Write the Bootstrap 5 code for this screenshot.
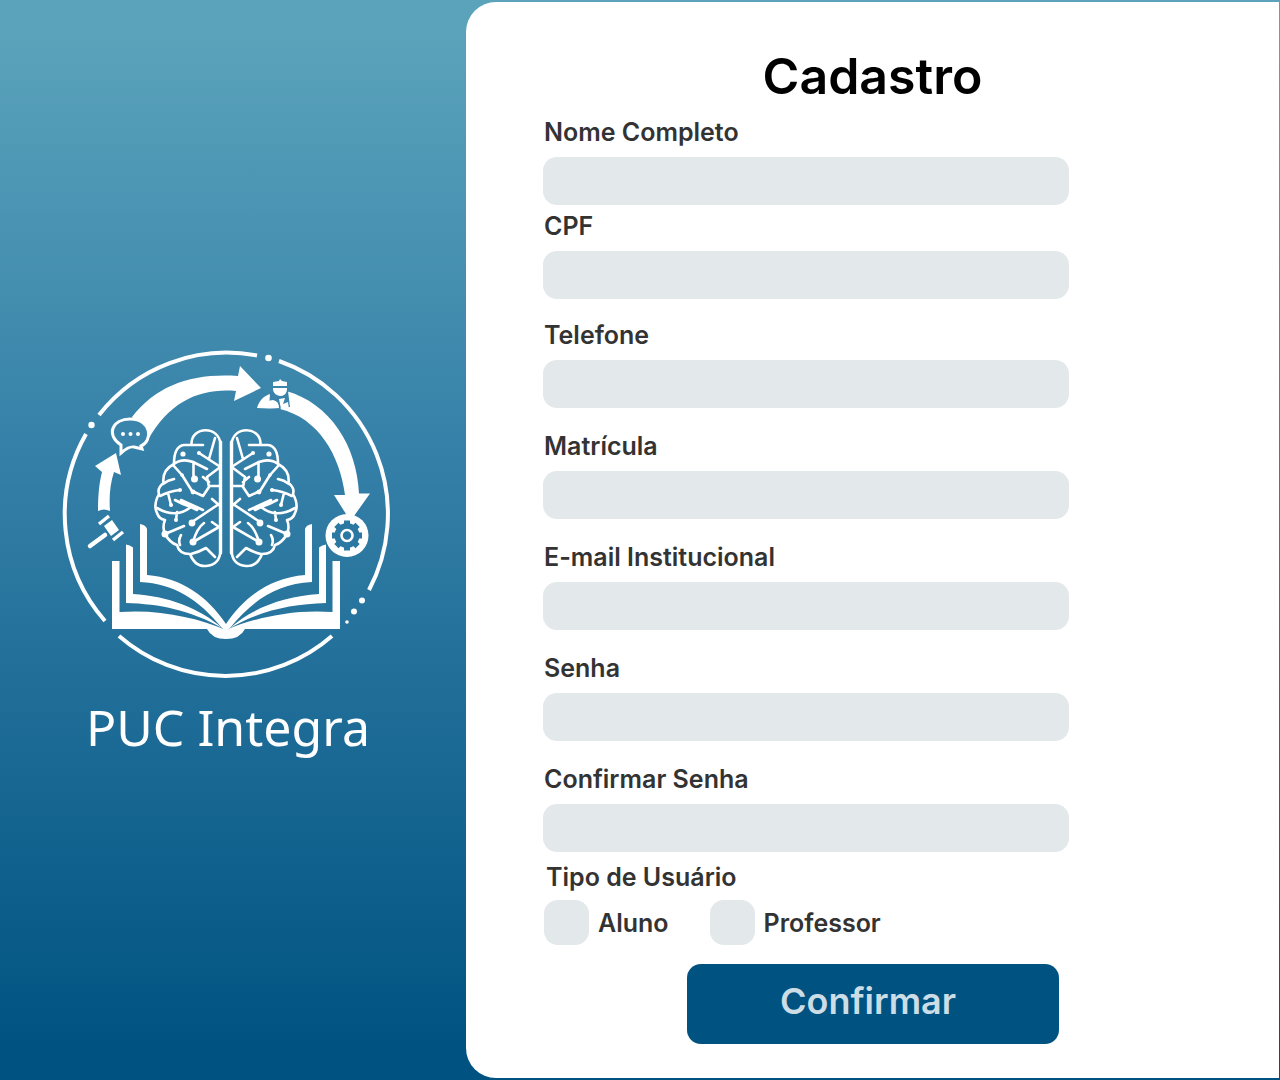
<!DOCTYPE html>
<html lang="pt-BR">
<head>
<meta charset="utf-8">
<meta name="viewport" content="width=device-width, initial-scale=1">
<title>PUC Integra - Cadastro</title>
<link href="https://cdn.jsdelivr.net/npm/bootstrap@5.3.0/dist/css/bootstrap.min.css" rel="stylesheet">
<style>
  body { font-family: Inter, "Liberation Sans", sans-serif; color: #333; }
  .page-shell { background: linear-gradient(180deg, #5ba3bb 3%, #3580a8 42%, #005381 97%); padding: 2px 1px 2px 0; }
  .brand-side { flex: 0 0 466px; padding: 28px 14px 0 0; }
  .brand-logo { width: 332px; }
  .brand-name { font: 400 50px/68px "Noto Sans", sans-serif; margin: 13px 0 0 4px; }
  .form-side { border-radius: 30px 0 0 30px; padding: 44px 77px 34px; }
  .page-title { font-size: 50px; line-height: 60px; font-weight: 600; color: #000; margin-bottom: 11px; }
  .field-text { display: block; font-size: 25px; line-height: 30px; font-weight: 600; margin-bottom: 10px; padding-left: 1px; }
  .field { max-width: 526px; margin-bottom: 23px; }
  .field-tight { margin-bottom: 6px; }
  .field-cpf { margin-bottom: 21px; }
  .field-last { margin-bottom: 10px; }
  .form-side .form-control { height: 48px; border: 0; border-radius: 14px; background-color: #e3e8ea; font-size: 22px; }
  .form-side .form-check-input { width: 45px; height: 45px; margin: 0; border: 0; border-radius: 14px; background-color: #e3e8ea; }
  .form-side .form-check-input:checked { background-color: #005381; }
  .type-title { padding-left: 3px; margin-bottom: 8px; }
  .type-options { gap: 41px; margin-bottom: 19px; padding-left: 1px; }
  .type-option { gap: 8px; }
  .btn-confirm { width: 372px; max-width: 100%; height: 80px; border: 0; border-radius: 14px; padding: 0 9px 6px 0; font-size: 36px; font-weight: 600; --bs-btn-bg: #005381; --bs-btn-color: #ccdde6; --bs-btn-hover-bg: #00456c; --bs-btn-hover-color: #fff; }
  @media (max-width: 991px) {
    .brand-side { flex-basis: auto; padding: 24px; }
    .form-side { border-radius: 30px 30px 0 0; padding: 32px 24px; }
  }
</style>
</head>
<body>
<div class="page-shell min-vh-100 d-flex flex-column flex-lg-row">
  <aside class="brand-side d-flex flex-column align-items-center justify-content-center text-white">
    <svg class="brand-logo" viewBox="60 348 332 332" role="img" aria-label="Logo PUC Integra" fill="#fff">
      <defs>
        <g id="brain-half" fill="none" stroke="#fff" stroke-width="2.6" stroke-linecap="round" stroke-linejoin="round">
          <path d="M220.500 445C220 425 191 426 191.500 444M203 445H184Q174 446 174 464M193 462Q182 458 174 464Q162 470 163.500 483Q157 488 159 494Q153 505 157 513Q159 519 165 520Q162 527 165 534Q170 543 177 545Q179 554 190 554Q195 567 206 566Q220 565 220.500 550"/>
          <path d="M220.500 442V553" stroke-width="3.400"/>
          <path d="M215 438L209 459M199 453L219 466M193 462L207 469M193.500 462V478M173 465L182 475L192 491L203 496L209 487L207 477L219 468M209 486H219M203 477L209 482M163 484Q168 480 174 479M160 496Q170 491 180 490M168 493L171 505M157 508Q176 519 191 507M175 500Q182 504 191 507L197 510M181 500L203 510M219 505L212 499M219 504L192 522M177 512L176 520M165 534L184 526M193 542Q197 528 204 523M193 542L219 527L212 522M180 545Q178 540 181 535M191 554Q199 552 206 548L215 557"/>
          <g fill="#fff" stroke="none"><circle cx="183" cy="454" r="2.600"/><circle cx="194.500" cy="479" r="3.500"/><circle cx="199" cy="453" r="2"/><circle cx="193" cy="492" r="2.400"/><circle cx="180" cy="490" r="2"/><circle cx="171" cy="505" r="2"/><circle cx="182" cy="475" r="1.800"/><circle cx="192" cy="523" r="3.400"/><circle cx="165" cy="534" r="3.500"/><circle cx="193" cy="542" r="3.500"/><circle cx="176" cy="520" r="2"/></g>
        </g>
        <g id="book-half">
          <path d="M112 561H119.500V612C160 609 198 618 226 630V639Q212 639 207 629H112Z"/>
          <path d="M126 544.500Q130 545 133 547.500V594C167 596 200 608 222 628C190 610 160 604 126 603Z"/>
          <path d="M140 524Q146 525 147 529V575C182 578 207 596 226 624V631L222 628C198 599 175 584 140 582Z"/>
        </g>
      </defs>
      <g fill="none" stroke="#fff" stroke-width="4">
        <path d="M99 415A162 162 0 0 1 257 355.500"/>
        <path d="M279 361A162 162 0 0 1 369 590"/>
        <path d="M332 636A162 162 0 0 1 119 636"/>
        <path d="M105 621A162 162 0 0 1 86 434"/>
      </g>
      <circle cx="91.500" cy="425" r="3.200"/><circle cx="268.500" cy="358" r="3.300"/>
      <circle cx="362" cy="600.500" r="3"/><circle cx="354" cy="611.500" r="3"/><circle cx="347" cy="622" r="1.800"/>
      <path d="M132 417C157 385 192 373 238 376L240 366L261 388L234 401L236 391C202 388 170 400 148 440Z"/>
      <path d="M98 511C98 496 99 484 102 472L95 466L116 453L121 475L114 472C110 484 109 497 110 511Q104 508 98 511Z"/>
      <path d="M286 391C330 403 357 446 359 493.500H370L354 516V524H346V514L334 495H345C340 455 318 418 280 409L257 408C259 401 264 395 271 394Z"/>
      <g>
        <path d="M270 394L273 390L288 391L290 407L279 409L269 408Z" fill="#3983ab"/>
        <path d="M273 382L279 381L280 379L282 381L287 382V386H273ZM273 388H287V390Q286 396 280 396Q274 395 273 390Z"/>
        <path d="M266 408Q266 400 273 400Q279 401 279 408Z"/>
        <path d="M279 399L285 398L283 404L288 402L289 409H281Z"/>
      </g>
      <path d="M121 445C105 434 113 419 130 419C152 419 153 441 141 446L142 449L134 447Q129 446 121 453Z" fill="#3b85ac" stroke="#fff" stroke-width="3"/>
      <circle cx="123" cy="434" r="2"/><circle cx="130.500" cy="434" r="2"/><circle cx="138" cy="434" r="2"/>
      <path d="M90 546L105 535" stroke="#fff" stroke-width="4.500" stroke-linecap="round"/>
      <path d="M99 524L109 516M113 540L123 532" stroke="#fff" stroke-width="3.500"/>
      <path d="M104 526L112 520L119 530L111 536Z"/>
      <circle cx="347" cy="535.500" r="21.500"/>
      <g fill="#2b78a2">
        <circle cx="347" cy="535.500" r="12.500"/>
        <path d="M347 520.500V550.500M332 535.500H362M336.400 524.900L357.600 546.100M336.400 546.100L357.600 524.900" stroke="#2b78a2" stroke-width="6"/>
        <circle cx="347" cy="535.500" r="5.500" stroke="#fff" stroke-width="2.600"/>
      </g>
      <use href="#brain-half"/><use href="#brain-half" transform="matrix(-1 0 0 1 452 0)"/>
      <use href="#book-half"/><use href="#book-half" transform="matrix(-1 0 0 1 452 0)"/>
    </svg>
    <p class="brand-name">PUC Integra</p>
  </aside>
  <main class="form-side bg-white flex-grow-1">
    <h1 class="page-title text-center">Cadastro</h1>
    <form>
      <div class="field field-tight"><label class="field-text" for="nome">Nome Completo</label><input class="form-control" type="text" id="nome"></div>
      <div class="field field-cpf"><label class="field-text" for="cpf">CPF</label><input class="form-control" type="text" id="cpf"></div>
      <div class="field"><label class="field-text" for="telefone">Telefone</label><input class="form-control" type="tel" id="telefone"></div>
      <div class="field"><label class="field-text" for="matricula">Matrícula</label><input class="form-control" type="text" id="matricula"></div>
      <div class="field"><label class="field-text" for="email">E-mail Institucional</label><input class="form-control" type="email" id="email"></div>
      <div class="field"><label class="field-text" for="senha">Senha</label><input class="form-control" type="password" id="senha"></div>
      <div class="field field-last"><label class="field-text" for="confirmar">Confirmar Senha</label><input class="form-control" type="password" id="confirmar"></div>
      <fieldset>
        <legend class="field-text type-title">Tipo de Usuário</legend>
        <div class="type-options d-flex flex-wrap">
          <div class="type-option d-flex align-items-center"><input class="form-check-input" type="checkbox" id="aluno"><label class="field-text mb-0" for="aluno">Aluno</label></div>
          <div class="type-option d-flex align-items-center"><input class="form-check-input" type="checkbox" id="professor"><label class="field-text mb-0" for="professor">Professor</label></div>
        </div>
      </fieldset>
      <div class="text-center"><button class="btn btn-confirm" type="submit">Confirmar</button></div>
    </form>
  </main>
</div>
<script src="https://cdn.jsdelivr.net/npm/bootstrap@5.3.0/dist/js/bootstrap.bundle.min.js"></script>
</body>
</html>
